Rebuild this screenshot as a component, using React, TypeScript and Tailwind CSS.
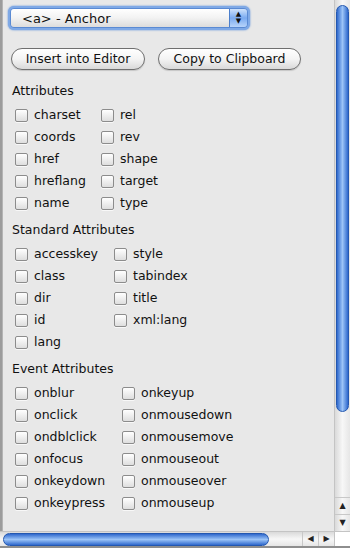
import React from 'react';

const font = { fontFamily: '"DejaVu Sans", "Noto Sans", sans-serif' };

type Section = { title: string; col: string; left: string[]; right: string[] };

const sections: Section[] = [
  {
    title: 'Attributes',
    col: 'grid-cols-[86px_auto]',
    left: ['charset', 'coords', 'href', 'hreflang', 'name'],
    right: ['rel', 'rev', 'shape', 'target', 'type'],
  },
  {
    title: 'Standard Attributes',
    col: 'grid-cols-[99px_auto]',
    left: ['accesskey', 'class', 'dir', 'id', 'lang'],
    right: ['style', 'tabindex', 'title', 'xml:lang'],
  },
  {
    title: 'Event Attributes',
    col: 'grid-cols-[107px_auto]',
    left: ['onblur', 'onclick', 'ondblclick', 'onfocus', 'onkeydown', 'onkeypress'],
    right: ['onkeyup', 'onmousedown', 'onmousemove', 'onmouseout', 'onmouseover', 'onmouseup'],
  },
];

function Check({ label }: { label: string }) {
  return (
    <div className="flex h-[22px] items-center gap-[6px] whitespace-nowrap">
      <span className="h-[13px] w-[13px] shrink-0 rounded-[2px] border border-[#8c8c8c] bg-gradient-to-b from-white to-[#dedede] shadow-[0_1px_0_rgba(255,255,255,0.7)]" />
      <span className="text-[12.5px] text-[#111]">{label}</span>
    </div>
  );
}

function Block({ s, first }: { s: Section; first?: boolean }) {
  const rows = Math.max(s.left.length, s.right.length);
  const cells: React.ReactNode[] = [];
  for (let i = 0; i < rows; i++) {
    cells.push(<div key={'l' + i}>{s.left[i] ? <Check label={s.left[i]} /> : null}</div>);
    cells.push(<div key={'r' + i}>{s.right[i] ? <Check label={s.right[i]} /> : null}</div>);
  }
  return (
    <div className={first ? '' : 'mt-[5px]'}>
      <div className="mb-[2px] h-[22px] pl-[9px] text-[12.5px] leading-[22px] text-[#111]">{s.title}</div>
      <div className={`grid ${s.col} pl-[12px]`}>{cells}</div>
    </div>
  );
}

function Pill({ children, w }: { children: React.ReactNode; w: string }) {
  return (
    <button
      className={`${w} h-[22px] rounded-full border border-[#6f6f6f] bg-gradient-to-b from-white via-[#f4f4f4] to-[#d9d9d9] text-[12.5px] leading-[20px] text-[#111] shadow-[0_1px_1px_rgba(0,0,0,0.15)]`}
    >
      {children}
    </button>
  );
}

export default function App() {
  return (
    <div style={font} className="flex h-[548px] w-[350px] flex-col overflow-hidden bg-[#e8e8e8]">
      <div className="flex min-h-0 flex-1">
        <div className="w-[3px] shrink-0 border-r border-[#b4b4b4] bg-[#9c9c9c]" />
        <div className="min-w-0 flex-1 overflow-hidden">
          {/* select */}
          <div className="ml-[5px] mt-[6px] h-[24px] w-[242px] rounded-[6px] bg-[#7fa9e6] p-[2px] shadow-[0_0_2px_#4d86d9]">
            <div className="flex h-full overflow-hidden rounded-[4px] border border-[#5a8ad3]">
              <div className="flex-1 bg-gradient-to-b from-white via-[#f2f2f2] to-[#dcdcdc] pl-[11px] text-[13px] leading-[19px] text-[#111]">
                &lt;a&gt; - Anchor
              </div>
              <div className="flex w-[18px] flex-col items-center justify-center border-l border-[#4b7fcc] bg-gradient-to-b from-[#cfe2fb] via-[#7aaaf0] to-[#b8d4fa] text-[7px] leading-[7px] text-[#111]">
                <span>▲</span>
                <span>▼</span>
              </div>
            </div>
          </div>
          {/* buttons */}
          <div className="ml-[8px] mt-[18px] flex gap-[13px]">
            <Pill w="w-[134px]">Insert into Editor</Pill>
            <Pill w="w-[143px]">Copy to Clipboard</Pill>
          </div>
          <div className="mt-[10px]">
            {sections.map((s, i) => (
              <Block key={s.title} s={s} first={i === 0} />
            ))}
          </div>
        </div>
        {/* vertical scrollbar */}
        <div className="flex w-[16px] shrink-0 flex-col border-l border-[#c4c4c4] bg-gradient-to-r from-[#dadada] via-[#f7f7f7] to-[#e6e6e6]">
          <div className="flex-1 pt-[5px]">
            <div className="mx-auto h-[407px] w-[13px] rounded-full border border-[#2458b0] bg-gradient-to-r from-[#2f68cc] via-[#9cc4f7] to-[#2f68cc]" />
          </div>
          <div className="flex h-[17px] items-center justify-center border-t border-[#c8c8c8] text-[8px] text-[#222]">▲</div>
          <div className="flex h-[17px] items-center justify-center border-t border-[#c8c8c8] text-[8px] text-[#222]">▼</div>
        </div>
      </div>
      {/* horizontal scrollbar */}
      <div className="flex h-[15px] shrink-0">
        <div className="flex flex-1 border-t border-[#c4c4c4] bg-gradient-to-b from-[#dadada] via-[#f7f7f7] to-[#e6e6e6]">
          <div className="flex-1 pl-[3px] pt-[1px]">
            <div className="h-[13px] w-[266px] rounded-full border border-[#2458b0] bg-gradient-to-b from-[#2f68cc] via-[#9cc4f7] to-[#2f68cc]" />
          </div>
          <div className="flex w-[16px] items-center justify-center border-l border-[#c8c8c8] text-[8px] text-[#222]">◀</div>
          <div className="flex w-[16px] items-center justify-center border-l border-[#c8c8c8] text-[8px] text-[#222]">▶</div>
        </div>
        <div className="w-[16px] border-l border-t border-[#c4c4c4] bg-white" />
      </div>
      <div className="h-[2px] shrink-0 bg-[#8e8e8e]" />
    </div>
  );
}
